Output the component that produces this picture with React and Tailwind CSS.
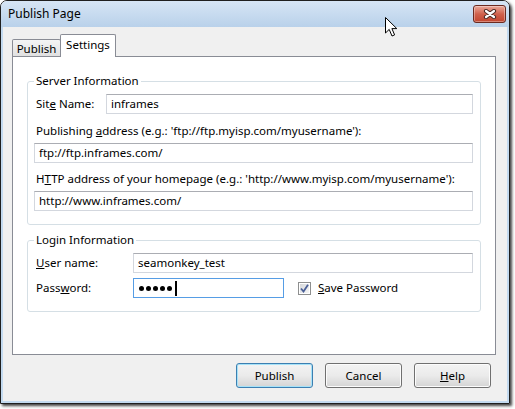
import React from "react";

const font = "font-['Noto_Sans','Liberation_Sans',sans-serif]";

const Field = ({ children, className = "" }) => (
  <div
    className={`h-[20px] flex items-center pl-[4px] border border-[#d3d7de] border-t-[#abadb3] bg-white text-black ${className}`}
  >
    {children}
  </div>
);

const Group = ({ title, children, className = "" }) => (
  <fieldset
    className={`border border-[#d5dfe5] rounded-[3px] pl-[6px] pr-[7px] pb-[13px] ${className}`}
  >
    <legend className="px-[2px] leading-[14px] text-black">{title}</legend>
    {children}
  </fieldset>
);

const Button = ({ children, primary }) => (
  <button
    className={`w-[77px] h-[25px] rounded-[3px] border bg-gradient-to-b from-[#f3f3f3] via-[#ebebeb] to-[#d4d4d4] text-black leading-none ${
      primary
        ? "border-[#3c7fb1] shadow-[inset_0_0_0_1px_#a6e2f8]"
        : "border-[#707070] shadow-[inset_0_0_0_1px_#fcfcfc]"
    }`}
  >
    {children}
  </button>
);

const CloseIcon = () => (
  <svg width="14" height="10" viewBox="0 0 14 10">
    <path d="M3 2 L11 8 M11 2 L3 8" stroke="#4a2a25" strokeWidth="4.2" strokeLinecap="round" />
    <path d="M3 2 L11 8 M11 2 L3 8" stroke="#ffffff" strokeWidth="2.2" strokeLinecap="round" />
  </svg>
);

const Cursor = () => (
  <svg width="14" height="21" viewBox="0 0 14 21" className="absolute left-[385px] top-[17px]">
    <path
      d="M0.5 0.5 L0.5 16 L4.2 12.4 L7 19 L9.6 17.9 L6.9 11.6 L11.8 11.6 Z"
      fill="#ffffff"
      stroke="#000000"
      strokeWidth="1"
      strokeLinejoin="round"
    />
  </svg>
);

const Checkbox = () => (
  <div className="w-[13px] h-[13px] border border-[#8e8f8f] bg-white p-[1px]">
    <div className="w-full h-full bg-gradient-to-br from-[#d6d8db] to-[#f6f6f6] flex items-center justify-center">
      <svg width="9" height="9" viewBox="0 0 9 9">
        <path d="M1 4.5 L3.5 7.5 L8 0.8" fill="none" stroke="#4a5f97" strokeWidth="1.8" />
      </svg>
    </div>
  </div>
);

export default function App() {
  return (
    <div className={`relative w-[515px] h-[409px] bg-white text-[11.5px] ${font}`}>
      <div className="w-[510px] h-[404px] flex flex-col rounded-t-[7px] border border-[#1f1f1f] shadow-[2px_2px_3px_rgba(0,0,0,0.75)] overflow-hidden">
        {/* title bar */}
        <div className="h-[26px] flex justify-between pl-[7px] pr-[3px] bg-gradient-to-b from-[#d6e5f5] to-[#b9d1ea]">
          <span className="leading-[26px] text-[12px] text-black">Publish Page</span>
          <div className="mt-[4px] w-[33px] h-[18px] rounded-[3px] border border-[#6b2a20] bg-gradient-to-b from-[#e9a99b] via-[#d0614c] to-[#c2452f] flex items-center justify-center shadow-[inset_0_0_0_1px_rgba(255,255,255,0.35)]">
            <CloseIcon />
          </div>
        </div>

        {/* body */}
        <div className="flex-1 bg-[#f0f0f0] border-x-2 border-b-2 border-[#c3daf0] pl-[9px] pt-[7px]">
          {/* tabs */}
          <div className="flex items-end h-[22px]">
            <div className="w-[49px] h-[17px] border border-b-0 border-[#898c95] rounded-t-[2px] bg-gradient-to-b from-[#f4f4f4] to-[#e1e1e1] text-center leading-[17px] text-black">
              Publish
            </div>
            <div className="relative z-10 -mb-px w-[56px] h-[23px] -ml-px border border-b-0 border-[#898c95] rounded-t-[2px] bg-white text-center leading-[20px] text-black">
              Settings
            </div>
          </div>

          {/* panel */}
          <div className="w-[484px] h-[299px] border border-[#898c95] bg-white pt-[17px] px-[14px]">
            <Group title="Server Information">
              <div className="flex items-center mt-[6px]">
                <span className="w-[72px] pl-[2px] text-black">
                  Sit<u>e</u> Name:
                </span>
                <Field className="flex-1">inframes</Field>
              </div>
              <div className="pl-[2px] mt-[10px] leading-[14px] text-black">
                Publishing <u>a</u>ddress (e.g.: 'ftp://ftp.myisp.com/myusername'):
              </div>
              <Field className="mt-[5px]">ftp://ftp.inframes.com/</Field>
              <div className="pl-[2px] mt-[9px] leading-[14px] text-black">
                H<u>T</u>TP address of your homepage (e.g.: 'http://www.myisp.com/myusername'):
              </div>
              <Field className="mt-[5px]">http://www.inframes.com/</Field>
            </Group>

            <Group title="Login Information" className="mt-[8px]">
              <div className="flex items-center mt-[6px]">
                <span className="w-[99px] pl-[2px] text-black">
                  <u>U</u>ser name:
                </span>
                <Field className="flex-1">seamonkey_test</Field>
              </div>
              <div className="flex items-center mt-[5px]">
                <span className="w-[99px] pl-[2px] text-black">
                  Pass<u>w</u>ord:
                </span>
                <div className="w-[151px] h-[20px] flex items-center gap-[2px] pl-[5px] border border-[#569de5] bg-white">
                  {[0, 1, 2, 3, 4].map((i) => (
                    <span key={i} className="w-[5px] h-[5px] rounded-full bg-black" />
                  ))}
                  <span className="ml-[1px] w-[2px] h-[15px] bg-black" />
                </div>
                <div className="ml-[14px]">
                  <Checkbox />
                </div>
                <span className="ml-[7px] text-black">
                  <u>S</u>ave Password
                </span>
              </div>
            </Group>
          </div>

          {/* buttons */}
          <div className="flex justify-end gap-[12px] pr-[16px] mt-[8px]">
            <Button primary>Publish</Button>
            <Button>Cancel</Button>
            <Button>
              <u>H</u>elp
            </Button>
          </div>
        </div>
      </div>
      <Cursor />
    </div>
  );
}
